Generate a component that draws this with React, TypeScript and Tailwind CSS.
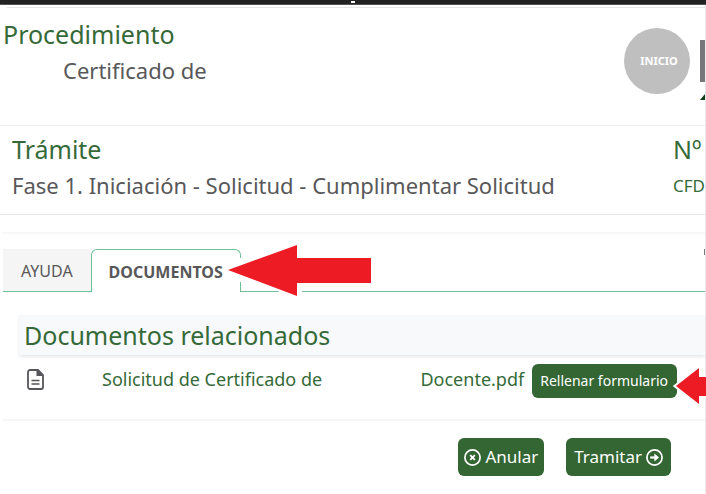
import React, { useState } from "react";

const tabs = [
  { id: "ayuda", label: "AYUDA" },
  { id: "documentos", label: "DOCUMENTOS" },
];

const DocumentIcon = () => (
  <svg width="17" height="21" viewBox="0 0 17 21" fill="none" aria-hidden="true">
    <path
      d="M3 1h8L16 6v12a2 2 0 0 1-2 2H3a2 2 0 0 1-2-2V3a2 2 0 0 1 2-2z"
      stroke="#55555a"
      strokeWidth="1.8"
    />
    <path d="M9.5 1v6H16L11 1z" fill="#55555a" />
    <path d="M4.5 11.5h8M4.5 15h8" stroke="#55555a" strokeWidth="1.7" />
  </svg>
);

const CancelIcon = () => (
  <svg width="17" height="17" viewBox="0 0 17 17" fill="none" stroke="#fff" aria-hidden="true">
    <circle cx="8.5" cy="8.5" r="7.6" strokeWidth="1.7" />
    <path d="M6.2 6.2l4.6 4.6M10.8 6.2l-4.6 4.6" strokeWidth="1.9" />
  </svg>
);

const NextIcon = () => (
  <svg width="17" height="17" viewBox="0 0 17 17" fill="none" stroke="#fff" aria-hidden="true">
    <circle cx="8.5" cy="8.5" r="7.6" strokeWidth="1.7" />
    <path d="M4.2 8.5h6" strokeWidth="2.2" />
    <path d="M8.4 4.6v7.8l4.7-3.9z" fill="#fff" stroke="none" />
  </svg>
);

const App = () => {
  const [activeTab, setActiveTab] = useState("documentos");

  return (
    <div className="overflow-hidden bg-white font-['Noto_Sans',sans-serif] text-[#58585a]">
      {/* borde de la ventana */}
      <div className="flex h-[5px] justify-center border-b border-[#555555] bg-[#222222]">
        <span className="mt-px h-[2px] w-1 bg-white" />
      </div>

      <div className="border-r border-[#e8e8e8] pt-[2px] pb-[17px]">
        <header className="flex h-[119px] border-b border-[#ececec]">
          <div className="ml-[7px] flex flex-1 border-t border-[#e6e6e6]">
            <div className="-ml-1 flex-1 pt-2">
              <h1 className="text-[25px] leading-9 text-[#356a38]">
                Procedimiento
              </h1>
              <p className="pl-[60px] text-[22px] leading-9">Certificado de</p>
            </div>
            <ol className="flex gap-[10px] pt-5">
              <li className="flex size-[66px] items-center justify-center rounded-full bg-[#bfbfbf] pl-1 text-[11px] font-bold text-white">
                INICIO
              </li>
              <li className="w-[5px] overflow-hidden pt-3">
                <div className="h-[42px] bg-[#77777b]" />
                <svg width="5" height="6" viewBox="0 0 5 6" className="mt-3" aria-hidden="true">
                  <path d="M0 6L5 0v6z" fill="#0d3d16" />
                </svg>
              </li>
            </ol>
          </div>
        </header>

        <section className="flex gap-4 border-b border-[#e6e6e6] pt-[5px] pb-[9px] pl-3 whitespace-nowrap">
          <div className="flex-1">
            <h2 className="text-[25px] leading-9 text-[#356a38]">Trámite</h2>
            <p className="text-[22px] leading-9">
              Fase 1. Iniciación - Solicitud - Cumplimentar Solicitud
            </p>
          </div>
          <div className="w-8 text-[#356a38]">
            <h2 className="text-[25px] leading-9">Nº</h2>
            <p className="text-[17px] leading-[38px]">CFD</p>
          </div>
        </section>

        <main className="mt-[17px] ml-[3px] border-t-2 border-[#f8f8f8] pt-[15px]">
          <div role="tablist" className="relative flex h-[43px]">
            {tabs.map((tab) => (
              <button
                key={tab.id}
                type="button"
                role="tab"
                aria-selected={activeTab === tab.id}
                onClick={() => setActiveTab(tab.id)}
                className={
                  activeTab === tab.id
                    ? "rounded-t-md border border-b-0 border-[#6fbf97] bg-white px-[17px] pt-px text-base font-bold"
                    : "border-b border-[#6fbf97] bg-[#f5f5f5] px-[18px] pt-[2px] text-base"
                }
              >
                {tab.label}
              </button>
            ))}
            <div className="flex-1 border-b border-[#6fbf97]" />
            <span className="absolute top-0 right-0 h-[6px] w-px bg-[#77777b]" />
            <svg
              width="152"
              height="56"
              viewBox="0 0 152 56"
              className="pointer-events-none absolute -top-1.5 left-[220px]"
              aria-hidden="true"
            >
              <path d="M14 15h8v24h-8zM52 46h27v4H58z" fill="#fff" />
              <path
                d="M5 27L74 2v13h74v25H74v13z"
                fill="#ed1c24"
                stroke="#fff"
                strokeWidth="3"
                paintOrder="stroke"
              />
            </svg>
          </div>

          <h3 className="mt-[23px] ml-4 bg-[#f7f9fb] pl-[5px] text-[25px] leading-10 text-[#356a38] shadow-[0_2px_3px_#e6e8ea]">
            Documentos relacionados
          </h3>

          <div className="flex h-[66px] items-start border-b-2 border-[#f6f8f8] pt-[9px] pr-7 pl-6 whitespace-nowrap">
            <span className="flex h-[30px] w-[75px] items-center">
              <DocumentIcon />
            </span>
            <a href="#" className="flex flex-1 justify-between pr-2 text-lg leading-[30px] text-[#356a38]">
              <span>Solicitud de Certificado de</span>
              <span>Docente.pdf</span>
            </a>
            <button
              type="button"
              className="relative h-[34px] rounded-md bg-[#336633] pr-[9px] pl-2 text-sm text-white"
            >
              Rellenar formulario
              <svg
                width="36"
                height="40"
                viewBox="0 0 36 40"
                className="pointer-events-none absolute top-[2px] -right-8"
                aria-hidden="true"
              >
                <path
                  d="M3 20L26 2v9h12v19H26v8z"
                  fill="#ed1c24"
                  stroke="#fff"
                  strokeWidth="4"
                  paintOrder="stroke"
                />
              </svg>
            </button>
          </div>

          <div className="flex justify-end gap-[22px] pt-[17px] pr-[34px] text-[17px] text-white">
            <button
              type="button"
              className="flex h-[38px] items-center gap-1 rounded-md bg-[#336633] px-[6px]"
            >
              <CancelIcon />
              Anular
            </button>
            <button
              type="button"
              className="flex h-[38px] items-center gap-1 rounded-md bg-[#336633] px-2"
            >
              Tramitar
              <NextIcon />
            </button>
          </div>
        </main>
      </div>
    </div>
  );
};

export default App;
